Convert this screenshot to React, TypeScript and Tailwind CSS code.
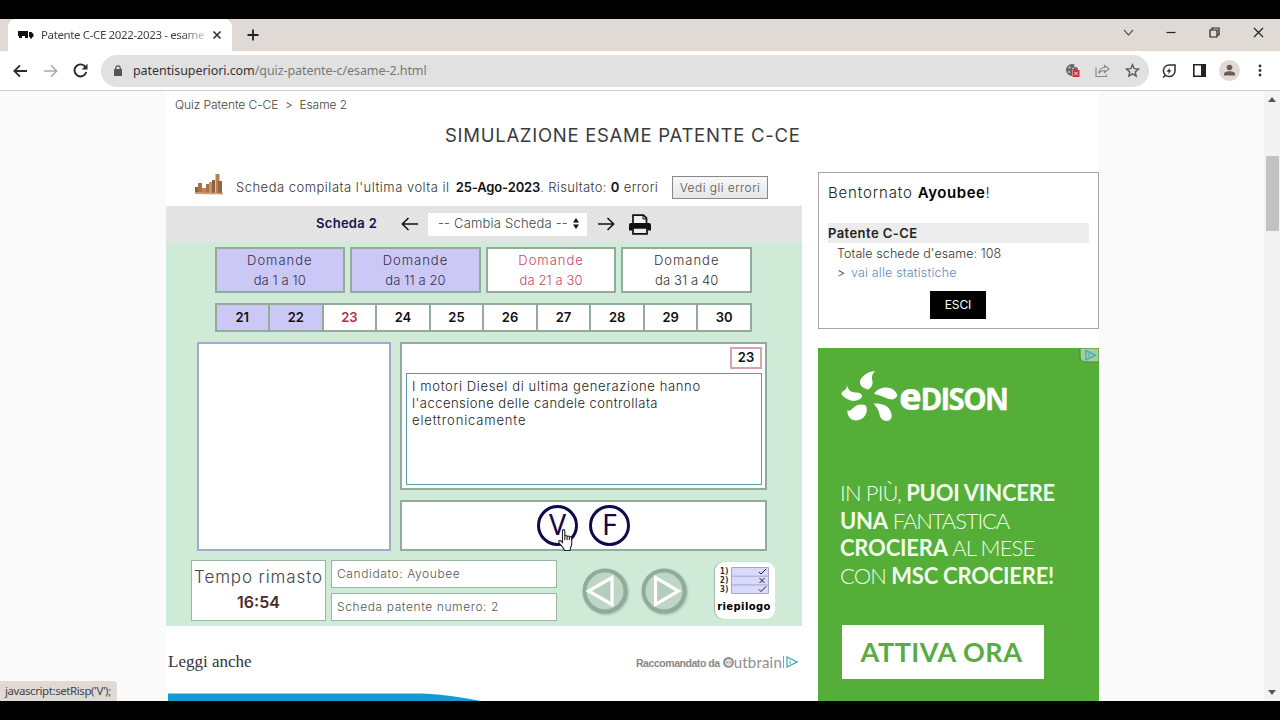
import type { ReactNode } from 'react';
import clsx from 'clsx';

const groups = ['1 a 10', '11 a 20', '21 a 30', '31 a 40'];
const numbers = [21, 22, 23, 24, 25, 26, 27, 28, 29, 30];

function TabStrip() {
  return (
    <div className="flex h-8 items-end bg-[#dfdad5] pl-2">
      <div className="flex h-[32px] w-[224px] items-center rounded-t-lg bg-white pl-[10px]">
        <svg width="16" height="10" viewBox="0 0 16 10" fill="#111">
          <path d="M0 1h10v5H0zM11 2h2.5l2 2.2V7H11zM1 6h3v2H1zM7 6h3v2H7zM12 6h2v2.5h-2z" />
        </svg>
        <span className="ml-[7px] w-[165px] bg-linear-to-r from-[#3c3c3c] from-85% to-[#3c3c3c]/20 bg-clip-text text-[11.500px] tracking-[-0.370px] whitespace-nowrap text-transparent">
          Patente C-CE 2022-2023 - esame
        </span>
        <svg className="ml-[6px]" width="10" height="10" viewBox="0 0 10 10" stroke="#333" strokeWidth="1.7">
          <path d="M1.5 1.5l7 7M8.500 1.500l-7 7" />
        </svg>
      </div>
      <svg className="mb-[10px] ml-[15px]" width="12" height="12" viewBox="0 0 12 12" stroke="#222" strokeWidth="1.8">
        <path d="M6 0.500v11M0.500 6h11" />
      </svg>
      <div className="mr-[16px] mb-[13px] ml-auto flex items-center gap-[33px]">
        <svg className="-mr-px" width="11" height="11" viewBox="0 0 11 11" fill="none" stroke="#333" strokeWidth="1.1">
          <path d="M1 3l4.500 5L10 3" />
        </svg>
        <svg width="10" height="11" viewBox="0 0 10 11" stroke="#222" strokeWidth="1.2">
          <path d="M0.500 5.500h9" />
        </svg>
        <svg width="11" height="11" viewBox="0 0 11 11" fill="none" stroke="#222" strokeWidth="1.2">
          <path d="M1 3h7v7H1zM3 3V1h7v7H8" />
        </svg>
        <svg width="11" height="11" viewBox="0 0 11 11" stroke="#222" strokeWidth="1.2">
          <path d="M1 1l9 9M10 1l-9 9" />
        </svg>
      </div>
    </div>
  );
}

function Toolbar() {
  return (
    <div className="flex h-10 items-center border-b border-[#cfcfcf] bg-white pl-[13px]">
      <svg width="14" height="14" viewBox="0 0 14 14" fill="none" stroke="#2b2b2b" strokeWidth="1.8">
        <path d="M14 7H1.500M7 1.300L1.300 7 7 12.700" />
      </svg>
      <svg className="ml-[17px]" width="14" height="14" viewBox="0 0 14 14" fill="none" stroke="#aaa" strokeWidth="1.6">
        <path d="M0 7h12.500M7 1.300L12.700 7 7 12.700" />
      </svg>
      <svg className="ml-[15px]" width="15" height="15" viewBox="0 0 15 15" fill="none" stroke="#2b2b2b" strokeWidth="1.9">
        <path d="M12.600 4.200A6 6 0 1 0 13.300 9" />
        <path d="M14.500 0.800v5.800H8.700z" fill="#2b2b2b" stroke="none" />
      </svg>
      <div className="ml-[13px] flex h-[32px] w-[1048px] items-center rounded-full bg-[#e1e1e1] pr-[9.500px] pl-[13px]">
        <svg width="8" height="11" viewBox="0 0 8 11">
          <path d="M0 4h8v7H0z" fill="#555" />
          <path d="M1.800 4.500V3a2.200 2.200 0 0 1 4.400 0v1.500" fill="none" stroke="#555" strokeWidth="1.200" />
        </svg>
        <span className="ml-[11px] pt-[2px] text-[12.500px] tracking-[-0.070px] whitespace-nowrap text-[#777]">
          <span className="text-[#333]">patentisuperiori.com</span>/quiz-patente-c/esame-2.html
        </span>
        <div className="ml-auto flex items-center gap-[15px]">
          <svg width="15" height="15" viewBox="0 0 15 15">
            <path d="M7 1a6 6 0 1 0 0 12V7h6a6 6 0 0 0-1-3l-2 .5L9 3l.5-1.500A6 6 0 0 0 7 1z" fill="#666" />
            <circle cx="4.500" cy="4.500" r="1" fill="#e1e1e1" />
            <circle cx="8" cy="5.500" r="0.800" fill="#e1e1e1" />
            <circle cx="4" cy="9" r="0.900" fill="#e1e1e1" />
            <path d="M7.500 7h7v7h-7z" fill="#cf3339" />
            <path d="M9.500 9l3 3M12.500 9l-3 3" stroke="#fff" strokeWidth="0.900" />
          </svg>
          <svg width="15" height="14" viewBox="0 0 15 14" fill="none" stroke="#8a8a8a" strokeWidth="1.200">
            <path d="M1 3.500v9h10.500V10.500M9.500 1.500L14 5 9.500 8.500V6.500C7 6.500 5 7.500 4 9.500 4 6 6.500 3.700 9.500 3.500z" />
          </svg>
          <svg width="15" height="15" viewBox="0 0 15 15" fill="none" stroke="#5a5a5a" strokeWidth="1.400">
            <path d="M7.500 1.700l1.700 4 4.300.4-3.300 2.800 1 4.200-3.700-2.300-3.700 2.300 1-4.200L1.500 6.100l4.300-.4z" />
          </svg>
        </div>
      </div>
      <svg className="ml-[13px]" width="14" height="14" viewBox="0 0 14 14" fill="none" stroke="#2f2f2f" strokeWidth="1.500">
        <path d="M13 1H7.500a5.800 5.800 0 1 0 5.500 5.800zM1 13.500l2-2" />
        <path d="M8 3.500L4.500 7.700h2.300L6 10.500l3.500-4.200H7.300z" fill="#2f2f2f" stroke="none" />
      </svg>
      <svg className="ml-[17px]" width="13" height="13" viewBox="0 0 13 13">
        <path d="M.8.8h11.400v11.400H.8z" fill="none" stroke="#222" strokeWidth="1.600" />
        <path d="M8 0h5v13H8z" fill="#222" />
      </svg>
      <svg className="ml-[13px]" width="21" height="21" viewBox="0 0 21 21">
        <circle cx="10.500" cy="10.500" r="10.500" fill="#dfdad5" />
        <circle cx="10.500" cy="7.500" r="2.800" fill="#6a5b53" />
        <path d="M5 15.500v-1.500c0-2 3.500-2.800 5.500-2.800s5.500.8 5.500 2.800v1.500z" fill="#6a5b53" />
      </svg>
      <svg className="ml-[18px]" width="4" height="13" viewBox="0 0 4 13" fill="#333">
        <circle cx="2" cy="2" r="1.400" />
        <circle cx="2" cy="6.500" r="1.400" />
        <circle cx="2" cy="11" r="1.400" />
      </svg>
    </div>
  );
}

function SchedaBar() {
  return (
    <div className="flex h-9 items-center bg-[repeating-linear-gradient(135deg,#e9e9e9_0px,#e9e9e9_1.500px,#dedede_1.500px,#dedede_2.830px)] pl-[150px]">
      <span className="w-[62px] text-[13px] font-semibold tracking-[0.300px] whitespace-nowrap text-[#17134f]">Scheda 2</span>
      <svg className="ml-[23px]" width="17" height="14" viewBox="0 0 17 14" fill="none" stroke="#111" strokeWidth="1.500">
        <path d="M17 7H1.500M7.500 1L1.300 7l6.200 6" />
      </svg>
      <div className="ml-[10px] flex h-[23px] w-[159px] items-center bg-white pl-[10px]">
        <span className="w-[130px] text-[13px] font-light tracking-[0.200px] whitespace-nowrap text-[#444]">-- Cambia Scheda --</span>
        <svg className="mb-px ml-[5px]" width="6" height="11" viewBox="0 0 6 11" fill="#111">
          <path d="M3 0l3 4.500H0zM3 11l3-4.500H0z" />
        </svg>
      </div>
      <svg className="ml-[11px]" width="17" height="14" viewBox="0 0 17 14" fill="none" stroke="#111" strokeWidth="1.500">
        <path d="M0 7h15.500M9.500 1l6.200 6-6.200 6" />
      </svg>
      <svg className="ml-[14px]" width="22" height="21" viewBox="0 0 22 21">
        <path d="M4 10V1.200h10.500l3 3V10" fill="#f2f2f2" stroke="#111" strokeWidth="1.700" />
        <path d="M14 1v4h4" fill="none" stroke="#111" />
        <path d="M2 9h18a2 2 0 0 1 2 2v5.500h-3.500V14h-15v2.500H0V11a2 2 0 0 1 2-2z" fill="#111" />
        <path d="M4 14h14v5.800H4z" fill="#eee" stroke="#111" strokeWidth="1.700" />
      </svg>
    </div>
  );
}

function RoundButton({ arrow }: { arrow: string }) {
  return (
    <svg className="drop-shadow-[1px_1px_1px_#9fb5a6]" width="48" height="46" viewBox="0 0 48 46">
      <circle cx="24" cy="23" r="20.500" fill="#bdd6c5" stroke="#8fab9a" strokeWidth="4" />
      <path d={arrow} fill="#b4cdbc" stroke="#fff" strokeWidth="3.200" />
    </svg>
  );
}

function Riepilogo() {
  return (
    <div className="flex h-[57px] w-[60px] flex-col rounded-[9px] bg-white pt-[5px] shadow-[-1px_0_1px_#9fb5a6]">
      <div className="flex pl-[5px]">
        <div className="w-[11px] font-['DejaVu_Sans_Mono',monospace] text-[8px] leading-[9px] font-bold tracking-[-0.200px] text-[#222]">
          <div>1)</div>
          <div>2)</div>
          <div>3)</div>
        </div>
        <svg width="38" height="27" viewBox="0 0 38 27" fill="none">
          <path d="M.5.5h37v26H.5zM.5 9.200h37M.5 17.900h37" fill="#d9d9fb" stroke="#a6a6cf" />
          <path d="M28 5l2 2 5-5M28 22.500l2 2 5-5M28.500 11l5 5M33.500 11l-5 5" stroke="#222" />
        </svg>
      </div>
      <span className="mt-[5px] pr-[2px] text-center font-['DejaVu_Sans',sans-serif] text-[10px] leading-[16px] font-bold tracking-[0.400px] text-black">riepilogo</span>
    </div>
  );
}

function AnswerButton({ children }: { children: ReactNode }) {
  return (
    <div className="flex size-[41px] items-center justify-center rounded-full border-3 border-[#10094d] pb-px font-['Noto_Sans',sans-serif] text-[28.500px] leading-none text-[#10094d]">
      {children}
    </div>
  );
}

function Quiz() {
  return (
    <div className="flex h-[384px] flex-col bg-[#cfead6]">
      <div className="mt-[5px] ml-[48.500px] flex w-[537.500px] gap-[5px]">
        {groups.map((g, i) => (
          <div
            key={g}
            className={clsx(
              'h-[46px] flex-1 border-2 border-[#93ab9a] pt-[2px] text-center text-[13px] leading-[19.500px] font-light',
              i < 2 ? 'bg-[#cbc8f6] text-[#33304d]' : 'bg-white text-[#333]',
              i === 2 && 'text-[#c8485f]'
            )}
          >
            <span className="tracking-[1px]">Domande</span>
            <br />
            <span className="tracking-[0.100px]">da {g}</span>
          </div>
        ))}
      </div>
      <div className="mt-[10px] ml-[48.500px] flex h-[29px] w-[537.500px] divide-x-2 divide-[#93ab9a] border-2 border-[#93ab9a]">
        {numbers.map((n) => (
          <div
            key={n}
            className={clsx(
              'flex flex-1 items-center justify-center text-[13px] font-semibold',
              n < 23 ? 'bg-[#cbc8f6] text-[#111]' : 'bg-white text-[#111]',
              n === 23 && 'text-[#b52c46]'
            )}
          >
            {n}
          </div>
        ))}
      </div>
      <div className="mt-[10px] ml-[31px] flex gap-[9px]">
        <div className="h-[209px] w-[194px] border-2 border-[#a5a9cf] bg-white" />
        <div className="flex w-[367px] flex-col gap-[10px]">
          <div className="flex h-[148px] flex-col border-2 border-[#93ab9a] bg-white pt-[3px] pr-[3px] pl-[4px]">
            <div className="flex h-[22px] w-[32px] items-center justify-center self-end border-2 border-[#d8a3ad] text-[13px] font-semibold text-[#111]">
              23
            </div>
            <div className="mt-[4px] h-[112px] border border-[#5a9bab] pt-[4px] pl-[5px] text-[13px] leading-[17px] font-light whitespace-nowrap text-[#222]">
              <span className="tracking-[0.640px]">I motori Diesel di ultima generazione hanno</span>
              <br />
              <span className="tracking-[0.490px]">l'accensione delle candele controllata</span>
              <br />
              <span className="tracking-[0.850px]">elettronicamente</span>
            </div>
          </div>
          <div className="relative flex h-[51px] items-center justify-center gap-[11px] border-2 border-[#93ab9a] bg-white pb-px">
            <AnswerButton>V</AnswerButton>
            <AnswerButton>F</AnswerButton>
            <svg className="absolute top-[27px] left-[156px]" width="16" height="23" viewBox="0 0 16 23" fill="#fff" stroke="#222" strokeWidth="1.100">
              <path d="M4.500 1.800c0-1.600 2.300-1.600 2.300 0v5.700c.3-1.300 2.200-1.200 2.300.2.500-1.100 2.200-.8 2.300.5.600-.9 2.300-.6 2.300.9V15c0 2-1.300 3.500-1.800 6.500H6.500C5.500 18.500 2.500 16 1 13.500c-.8-1.500.9-2.500 2-1.500l1.500 1.500z" />
              <path d="M6.800 7.500v3.500M9.100 7.800v3.200M11.400 8.500V11" />
            </svg>
          </div>
        </div>
      </div>
      <div className="mt-[9px] ml-[25px] flex">
        <div className="flex h-[61px] w-[135px] flex-col items-center border border-[#9ab5a2] bg-white pt-[3px]">
          <span className="text-[17px] leading-[26px] font-light tracking-[0.880px] whitespace-nowrap text-[#444]">Tempo rimasto</span>
          <span className="text-[16px] leading-[25px] font-semibold text-[#4a2c2c]">16:54</span>
        </div>
        <div className="ml-[5px] flex w-[226px] flex-col gap-[5px] text-[12px] font-light tracking-[0.600px] text-[#555]">
          <div className="flex h-[28px] items-center border border-[#9ab5a2] bg-white pl-[5px]">Candidato: Ayoubee</div>
          <div className="flex h-[28px] items-center border border-[#9ab5a2] bg-white pl-[5px]">Scheda patente numero: 2</div>
        </div>
        <div className="mt-[8px] ml-[24px] flex gap-[11px]">
          <RoundButton arrow="M31 9.500v27L7.500 23z" />
          <RoundButton arrow="M15.500 9.500v27L38.500 23z" />
        </div>
        <div className="mt-[2px] ml-[27px]">
          <Riepilogo />
        </div>
      </div>
    </div>
  );
}

function Outbrain() {
  return (
    <div className="mt-[27px] flex h-[18px] items-center justify-between pr-[4px] pl-[2px]">
      <span className="font-['Liberation_Serif',serif] text-[17px] whitespace-nowrap text-[#333]">Leggi anche</span>
      <div className="flex items-center">
        <span className="pt-[3px] font-['Liberation_Sans',sans-serif] text-[10.500px] font-bold tracking-[-0.450px] whitespace-nowrap text-[#888]">Raccomandato da</span>
        <svg className="ml-[3px]" width="11" height="11" viewBox="0 0 11 11">
          <circle cx="5.500" cy="5.500" r="4.500" fill="#ddd" stroke="#888" strokeWidth="1.700" />
          <path d="M1 4c3-3 6-3 9 0V2L5.500 0 1 2z" fill="#888" />
          <circle cx="4" cy="5.500" r=".7" fill="#777" />
          <circle cx="7" cy="5.500" r=".7" fill="#777" />
        </svg>
        <span className="font-['Lato',sans-serif] text-[15px] leading-none tracking-[0.200px] text-[#8e8e8e]">utbrain</span>
        <svg className="ml-[1px]" width="15" height="12" viewBox="0 0 15 12" fill="none">
          <path d="M.5 0v12" stroke="#999" />
          <path d="M4 1v10L14 6z" stroke="#3ba5b5" strokeWidth="1.200" />
          <path d="M7 4.500v3.500" stroke="#3ba5b5" />
        </svg>
      </div>
    </div>
  );
}

function LeftColumn() {
  return (
    <div className="w-[636px]">
      <div className="flex h-[35px] items-center pb-[2px] pl-[29px]">
        <svg className="mb-[6px]" width="30" height="21" viewBox="0 0 30 21">
          <path d="M0 13h4v7H0z" fill="#8f6040" />
          <path d="M3 9h4v11H3z" fill="#a5714b" />
          <path d="M7 14h4v6H7z" fill="#bb8358" />
          <path d="M11 10h4v10h-4z" fill="#a5714b" />
          <path d="M14 8h3v12h-3z" fill="#c5936b" />
          <path d="M17 6h3v14h-3z" fill="#8f6040" />
          <path d="M20.500 0h4v20h-4z" fill="#b98052" />
          <path d="M23 7h4v13h-4z" fill="#936642" />
          <path d="M0 18l28 1v1.500L0 20z" fill="#c99e7b" />
        </svg>
        <span className="ml-[11px] w-[436px] text-[13px] font-light tracking-[0.490px] whitespace-nowrap text-[#333]">
          Scheda compilata l'ultima volta il{' '}
          <b className="ml-[2px] font-semibold tracking-[-0.150px] text-[#111]">25-Ago-2023</b>
          <span className="tracking-[0.350px]">
            . Risultato: <b className="font-semibold text-[#111]">0</b> errori
          </span>
        </span>
        <button className="h-[23px] w-[96px] border border-[#888] bg-linear-to-b from-[#f8f8f8] to-[#e6e6e6] text-[12px] font-light tracking-[0.450px] whitespace-nowrap text-[#555]">
          Vedi gli errori
        </button>
      </div>
      <SchedaBar />
      <Quiz />
      <Outbrain />
      <svg className="mt-[22px] ml-[2px]" width="320" height="8" viewBox="0 0 320 8">
        <path d="M0 .5h255c20 1 40 4 58 7.500H0z" fill="#159bd3" />
      </svg>
    </div>
  );
}

function EdisonAd() {
  return (
    <div className="mt-[19px] flex h-[353px] w-[281px] flex-col bg-[#54ae38]">
      <svg className="self-end" width="20" height="15" viewBox="0 0 20 15">
        <path d="M1 0h19v14H6q-5 0-5-6z" fill="#a4cf9b" stroke="#3f8a35" />
        <path d="M7 2.500v9.500l9.500-4.700z" fill="none" stroke="#3ca8c0" strokeWidth="1.300" />
        <path d="M10 5.500v4" stroke="#3ca8c0" />
      </svg>
      <div className="mt-[7px] ml-[22px] flex h-[54px]">
        <svg width="59" height="54" viewBox="0 0 59 54" fill="#fff">
          <path d="M35 1c-5 0-13 4-15 10-.5 4 2 7 8 8.500 4-2 5.500-6 4-10-.5-3 .5-6 3-8.500z" />
          <path d="M7 15c1 5 4 7.500 9 7.500 4 0 6 1.500 6 4-1 3-6 5-11 4-4-1-7-3-9.500-6 0-2 1-3.500 3.500-4.500 1-1 2-3 2-5z" />
          <path d="M34 24c2-4 7-6.500 12-6.500 6 0 10 3.500 11.500 8-2 4-5 4.500-8.500 3.500-5-1.500-9-4-15-5z" />
          <path d="M26 35.500c1.500 4 1 9-3 12.500-4 3-9 3-12 1-3-2.500-4-6-3.500-9l2 1c3-2 4-4 7-5.500 3-1.500 6-1.500 9.500 0z" />
          <path d="M33.500 33.500c6-.5 12 1 15 4.500 2.500 3 3.500 6 3 9.500-1 3-4 4-7 3-4-1.500-4.500-4-5.500-8-1-4-3-6-5.500-9z" />
        </svg>
        <div className="mt-[10px] flex items-baseline font-['Open_Sans',sans-serif] leading-[32px] font-extrabold text-white">
          <span className="text-[37px] tracking-[-1.500px]">e</span>
          <span className="text-[29.500px] font-bold tracking-[-1.700px] [-webkit-text-stroke:0.400px_#fff]">DISON</span>
        </div>
      </div>
      <div className="mt-[55px] ml-[22px] font-['Lato',sans-serif] text-[22px] leading-[27.500px] font-light tracking-[-0.850px] whitespace-nowrap text-[#f2ffec]">
        IN PIÙ, <b className="font-bold tracking-[-0.220px]">PUOI VINCERE</b>
        <br />
        <b className="font-bold tracking-[-0.300px]">UNA</b> <span className="tracking-[-1.100px]">FANTASTICA</span>
        <br />
        <b className="font-bold tracking-[-0.200px]">CROCIERA</b> AL MESE
        <br />
        CON <b className="font-bold tracking-[-0.220px]">MSC CROCIERE!</b>
      </div>
      <div className="mt-[36px] ml-[24px] flex h-[54px] w-[202px] items-center justify-center bg-white pr-[3px] font-['Lato',sans-serif] text-[27px] font-bold tracking-[0.500px] whitespace-nowrap text-[#5aab43]">
        ATTIVA ORA
      </div>
    </div>
  );
}

function Sidebar() {
  return (
    <div className="w-[281px]">
      <div className="mt-px flex h-[157px] flex-col border border-[#a5a5a5] px-[9px] pt-[9px]">
        <p className="text-[15px] leading-[22px] font-light tracking-[0.840px] whitespace-nowrap text-[#222]">
          Bentornato <b className="font-semibold tracking-[0.550px] text-black">Ayoubee</b>!
        </p>
        <div className="mt-[19px] h-[20px] bg-[#ececec] text-[13px] leading-[20px] font-semibold tracking-[0.430px] text-[#222]">Patente C-CE</div>
        <div className="mt-[1px] pl-[9px] text-[12.500px] leading-[19px] font-light tracking-[0.080px] text-[#333]">
          Totale schede d'esame: 108
          <br />
          &gt;<a className="ml-[2px] tracking-[0.180px] text-[#5b8cc0]"> vai alle statistiche</a>
        </div>
        <button className="mt-[9px] ml-[102px] h-[28px] w-[56px] bg-black text-[12px] tracking-[-0.100px] text-white">ESCI</button>
      </div>
      <EdisonAd />
    </div>
  );
}

export default function App() {
  return (
    <div className="flex h-[720px] w-[1280px] flex-col overflow-hidden bg-black pt-[19px] font-['Noto_Sans',sans-serif]">
      <TabStrip />
      <Toolbar />
      <div className="relative flex h-[610px] overflow-hidden bg-[#fafafa] font-['Inter',sans-serif]">
        <div className="ml-[166px] w-[933px] bg-white">
          <div className="flex h-[27px] items-center pl-[9px] text-[12px] font-light tracking-[-0.060px] whitespace-pre text-[#444]">
            Quiz Patente C-CE{'  '}&gt;{'  '}Esame 2
          </div>
          <h1 className="pl-[279px] text-[18.500px] leading-[34px] tracking-[0.720px] whitespace-nowrap text-[#3a3a3a]">SIMULAZIONE ESAME PATENTE C-CE</h1>
          <div className="mt-[19px] flex gap-[16px]">
            <LeftColumn />
            <Sidebar />
          </div>
        </div>
        <div className="ml-auto flex w-4 flex-col items-center bg-[#f3f3f3]">
          <svg className="mt-[6px]" width="8" height="5" viewBox="0 0 8 5" fill="#555">
            <path d="M4 0l4 5H0z" />
          </svg>
          <div className="mt-[54px] h-[75px] w-[13px] bg-[#c2c2c2]" />
          <svg className="mt-auto mb-[6px]" width="8" height="5" viewBox="0 0 8 5" fill="#555">
            <path d="M4 5l4-5H0z" />
          </svg>
        </div>
        <div className="absolute bottom-0 left-0 flex h-[20px] w-[117px] items-center rounded-tr-[4px] bg-[#dfdad5] pl-[5px] font-['Noto_Sans',sans-serif] text-[11.500px] tracking-[-0.420px] whitespace-nowrap text-[#444]">
          javascript:setRisp('V');
        </div>
      </div>
    </div>
  );
}
